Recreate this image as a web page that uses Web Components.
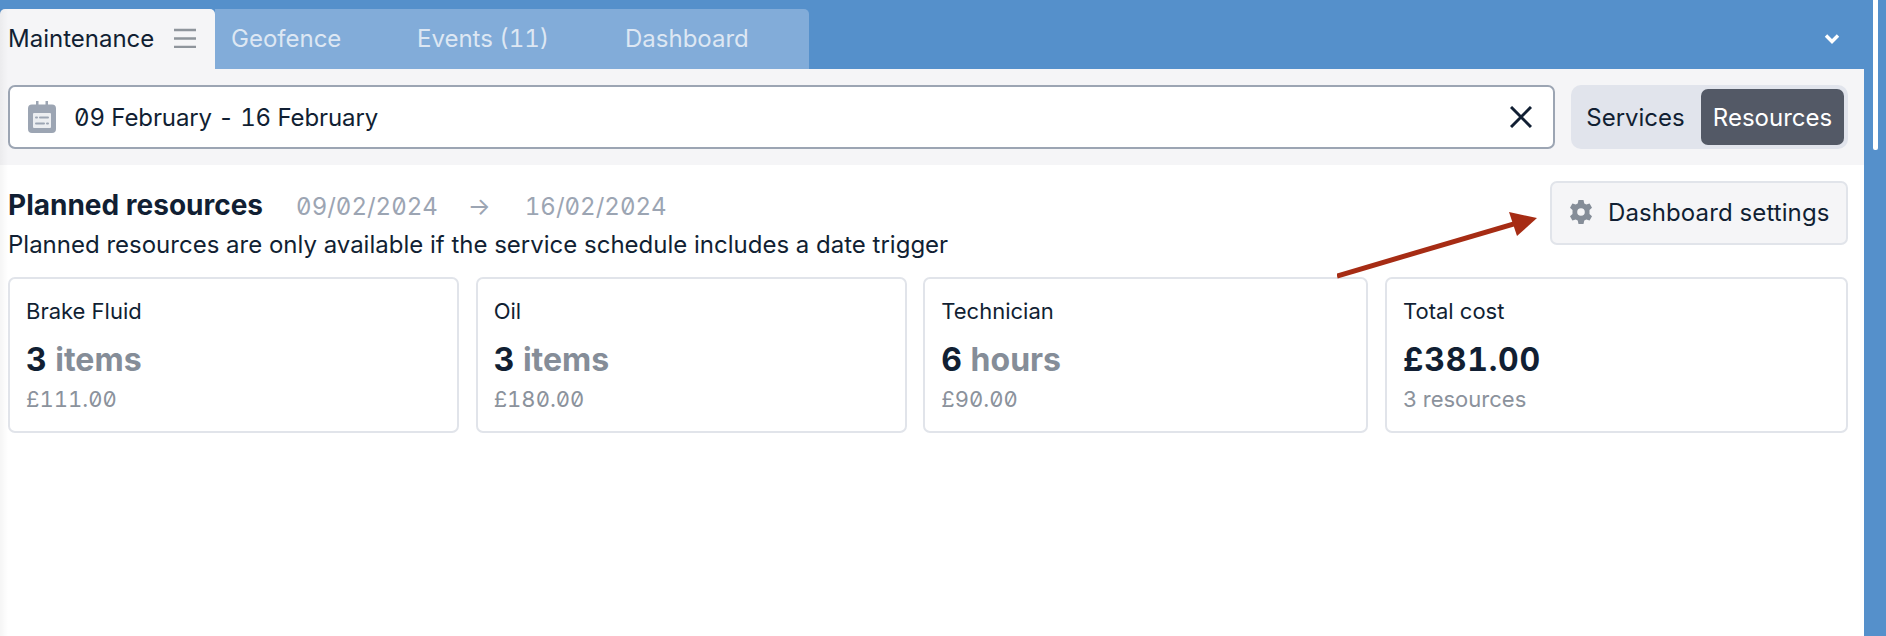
<!DOCTYPE html>
<html>
<head>
<meta charset="utf-8">
<style>
  html, body { margin: 0; height: 100%; }
  body {
    font-family: Inter, "Liberation Sans", sans-serif;
    color: #111f33;
    background: #5590cb;
    overflow: hidden;
  }
</style>
</head>
<body>
<maint-page></maint-page>

<script>
// top tab strip
class TabBar extends HTMLElement {
  constructor() {
    super();
    this.attachShadow({ mode: "open" }).innerHTML = `
      <style>
        :host { display: flex; height: 60px; padding-top: 9px; font-size: 24px; }
        .active {
          width: 215px; box-sizing: border-box; padding: 0 0 2px 8px;
          display: flex; align-items: center; gap: 20px;
          background: #f5f5f7; border-radius: 5px 5px 0 0;
        }
        .rest {
          width: 594px; box-sizing: border-box; padding-bottom: 2px; display: flex; align-items: center;
          background: #82acd9; color: #dde7f3; border-radius: 0 5px 0 0;
          font-feature-settings: "tnum";
        }
        .rest span:nth-child(1) { margin-left: 16px; width: 186px; }
        .rest span:nth-child(2) { width: 208px; }
        .chev { margin-left: auto; margin-right: 24px; align-self: center; display: flex; }
      </style>
      <div class="active">Maintenance
        <svg width="22" height="20" viewBox="0 0 22 20"><path d="M0 2h22M0 10.500h22M0 19h22" stroke="#8f959c" stroke-width="2.500"/></svg>
      </div>
      <div class="rest"><span>Geofence</span><span>Events (11)</span><span>Dashboard</span></div>
      <div class="chev"><svg width="16" height="12" viewBox="0 0 16 12"><path d="M2 2.500L8 8.500l6-6" fill="none" stroke="#fff" stroke-width="3.400"/></svg></div>
    `;
  }
}

// date range input + services/resources switch
class FilterBar extends HTMLElement {
  constructor() {
    super();
    this.attachShadow({ mode: "open" }).innerHTML = `
      <style>
        :host {
          display: flex; gap: 16px; padding: 16px 16px 16px 8px; height: 96px; box-sizing: border-box;
          background: #f5f5f7; font-size: 24px;
        }
        .date {
          flex: 1; display: flex; align-items: center; box-sizing: border-box;
          background: #fff; border: 2px solid #9ca5b3; border-radius: 7px;
          padding: 0 21px 0 18px;
          font-feature-settings: "zero", "tnum";
        }
        .date svg:first-child { margin-right: 18px; }
        .date .x { margin-left: auto; }
        .date span { letter-spacing: -0.1px; }
        .switch {
          width: 277px; box-sizing: border-box; padding: 4px; display: flex;
          background: #e1e4ec; border-radius: 10px;
        }
        .switch span { display: flex; align-items: center; justify-content: center; }
        .switch .off { flex: 1; padding-right: 5px; }
        .switch .on { flex: none; width: 143px; background: #535966; color: #fff; border-radius: 7px; }
      </style>
      <div class="date">
        <svg width="28" height="32" viewBox="0 0 28 32">
          <path fill="#9ca5b3" d="M8 0h2.500v3.500h7V0H20v3.500h4a4 4 0 0 1 4 4V28a4 4 0 0 1-4 4H4a4 4 0 0 1-4-4V7.500a4 4 0 0 1 4-4h4z"/>
          <rect x="5" y="12" width="18" height="15" rx="1" fill="#eceef1"/>
          <path d="M8 16.500h1M12 16.500h8M8 22.500h8M19 22.500h1" stroke="#9ca5b3" stroke-width="2" stroke-linecap="round"/>
        </svg>
        <span>09 February - 16 February</span>
        <svg class="x" width="22" height="22" viewBox="0 0 22 22"><path d="M1 1l20 20M21 1L1 21" stroke="#111f33" stroke-width="3"/></svg>
      </div>
      <div class="switch"><span class="off">Services</span><span class="on">Resources</span></div>
    `;
  }
}

class StatCard extends HTMLElement {
  constructor() {
    super();
    this.attachShadow({ mode: "open" }).innerHTML = `
      <style>
        :host {
          display: block; box-sizing: border-box; height: 156px; padding: 18px 16px;
          background: #fff; border: 2px solid #e1e4ea; border-radius: 7px;
        }
        .name { font-size: 22px; line-height: 28px; }
        .value { font-size: 32px; line-height: 34px; font-weight: 700; margin-top: 18px; font-feature-settings: "tnum"; color: #111f33; }
        ::slotted(.unit) { color: #858d98; }
        ::slotted(.total) { letter-spacing: 0.8px; }
        .sub { font-size: 22px; line-height: 28px; margin-top: 8px; color: #8b929c; }
        ::slotted(.money) { font-feature-settings: "zero", "tnum"; }
      </style>
      <div class="name"><slot name="name"></slot></div>
      <div class="value"><slot name="num"></slot> <slot name="value"></slot></div>
      <div class="sub"><slot name="sub"></slot></div>
    `;
  }
}

class ResourcesPanel extends HTMLElement {
  constructor() {
    super();
    this.attachShadow({ mode: "open" }).innerHTML = `
      <style>
        :host { display: block; background: #fff; padding: 16px 16px 0 8px; flex: 1; }
        .head { display: flex; justify-content: space-between; height: 96px; }
        h2 { margin: 7px 0 0; font-size: 28px; font-weight: 700; line-height: 34px; display: flex; align-items: baseline; }
        .range {
          display: flex; margin-left: 33px; font-size: 24px; font-weight: 400; color: #9ca5b3;
          font-feature-settings: "zero", "tnum";
        }
        .range .to { margin: 0 34px 0 30px; }
        p { margin: 6px 0 0; font-size: 24px; line-height: 30px; }
        button {
          width: 298px; height: 64px; margin: 0; padding: 0 0 2px 18px; box-sizing: border-box;
          display: flex; align-items: center; gap: 16px;
          font: inherit; font-size: 24px; color: inherit; letter-spacing: 0.1px;
          background: #f5f5f7; border: 2px solid #e1e4ea; border-radius: 7px;
        }
        .cards { display: grid; grid-template-columns: 451fr 431fr 445fr 463fr; gap: 16.670px; }
        .arrow { position: absolute; left: 1337px; top: 212px; }
      </style>
      <div class="head">
        <div>
          <h2>Planned resources <span class="range"><span>09/02/2024</span><span class="to">→</span><span>16/02/2024</span></span></h2>
          <p>Planned resources are only available if the service schedule includes a date trigger</p>
        </div>
        <button>
          <svg width="22" height="24" viewBox="0 0 22 24"><path fill="#858d98" fill-rule="evenodd" d="M8.500 0h5l.8 3.400 2 1.100 3.300-1 2.400 4.200-2.500 2.400v3.800l2.500 2.400-2.400 4.200-3.300-1-2 1.100-.8 3.400h-5l-.8-3.400-2-1.100-3.300 1L0 16.300l2.500-2.400v-3.800L0 7.700l2.400-4.200 3.300 1 2-1.100zM11 8.200a3.800 3.800 0 1 0 0 7.600 3.800 3.800 0 0 0 0-7.600z"/></svg>
          Dashboard settings
        </button>
      </div>
      <div class="cards"><slot></slot></div>
      <svg class="arrow" width="210" height="70" viewBox="0 0 210 70">
        <path d="M0 64L190 8" stroke="#a62c14" stroke-width="5" fill="none"/>
        <path d="M200 6L172 0l8 24z" fill="#a62c14"/>
      </svg>
    `;
  }
}

class MaintPage extends HTMLElement {
  constructor() {
    super();
    this.attachShadow({ mode: "open" }).innerHTML = `
      <style>
        :host { display: flex; height: 636px; position: relative; }
        main { width: 1864px; display: flex; flex-direction: column; }
        .bar { position: absolute; right: 8px; top: 0; width: 5px; height: 150px; background: #fff; border-radius: 0 0 2px 2px; }
        .edge { position: absolute; left: 0; top: 9px; bottom: 0; width: 8px; background: linear-gradient(90deg, rgba(0,0,0,.04), transparent); }
      </style>
      <main>
        <tab-bar></tab-bar>
        <filter-bar></filter-bar>
        <resources-panel>
          <stat-card><span slot="name">Brake Fluid</span><span slot="num">3</span><span slot="value" class="unit">items</span><span slot="sub" class="money">£111.00</span></stat-card>
          <stat-card><span slot="name">Oil</span><span slot="num">3</span><span slot="value" class="unit">items</span><span slot="sub" class="money">£180.00</span></stat-card>
          <stat-card><span slot="name">Technician</span><span slot="num">6</span><span slot="value" class="unit">hours</span><span slot="sub" class="money">£90.00</span></stat-card>
          <stat-card><span slot="name">Total cost</span><span slot="num" class="total">£381.00</span><span slot="sub">3 resources</span></stat-card>
        </resources-panel>
      </main>
      <div class="edge"></div>
      <div class="bar"></div>
    `;
  }
}

customElements.define("tab-bar", TabBar);
customElements.define("filter-bar", FilterBar);
customElements.define("stat-card", StatCard);
customElements.define("resources-panel", ResourcesPanel);
customElements.define("maint-page", MaintPage);
</script>
</body>
</html>
